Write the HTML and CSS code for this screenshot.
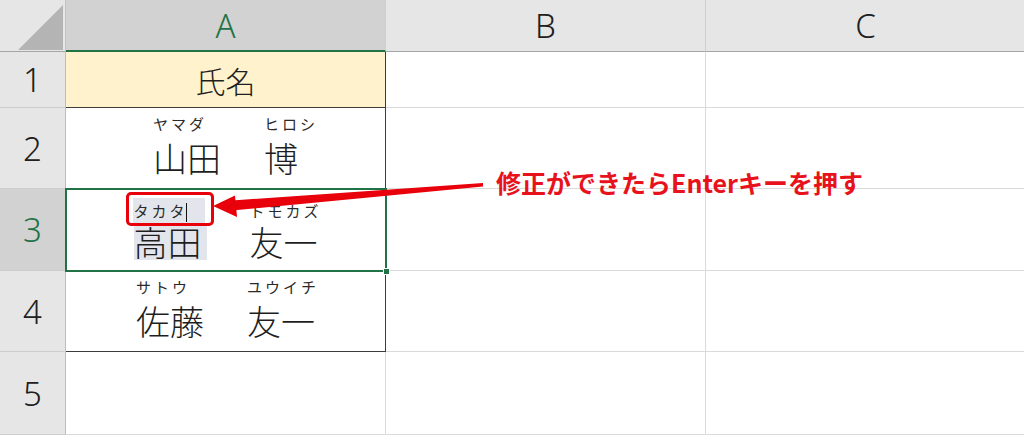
FILE: index.html
```html
<!DOCTYPE html>
<html lang="ja">
<head>
<meta charset="utf-8">
<title>Sheet</title>
<link rel="stylesheet" href="styles.css">
</head>
<body>
<div class="sheet">
  <div class="corner">
    <svg class="corner-tri" width="66" height="52" viewBox="0 0 66 52"><polygon points="18,50 63,50 63,5" fill="#b4b4b4"/></svg>
  </div>
  <div class="colhead sel">A</div>
  <div class="colhead">B</div>
  <div class="colhead">C</div>

  <div class="rowhead">1</div>
  <div class="cell a title">氏名</div>
  <div class="cell"></div>
  <div class="cell"></div>

  <div class="rowhead">2</div>
  <div class="cell a">
    <div class="name">
      <div class="grp"><span class="kana">ヤマダ</span><span class="kanji">山田</span></div>
      <div class="grp"><span class="kana">ヒロシ</span><span class="kanji">博</span></div>
    </div>
  </div>
  <div class="cell"></div>
  <div class="cell"></div>

  <div class="rowhead selrow">3</div>
  <div class="cell a">
    <div class="name editing">
      <div class="grp"><span class="kana hl-kana">タカタ<span class="caret"></span></span><span class="kanji hl-kanji">高田</span></div>
      <div class="grp"><span class="kana">トモカズ</span><span class="kanji">友一</span></div>
    </div>
  </div>
  <div class="cell"></div>
  <div class="cell"></div>

  <div class="rowhead">4</div>
  <div class="cell a last">
    <div class="name">
      <div class="grp"><span class="kana">サトウ</span><span class="kanji">佐藤</span></div>
      <div class="grp"><span class="kana">ユウイチ</span><span class="kanji">友一</span></div>
    </div>
  </div>
  <div class="cell"></div>
  <div class="cell"></div>

  <div class="rowhead">5</div>
  <div class="cell"></div>
  <div class="cell"></div>
  <div class="cell"></div>
</div>

<div class="selection"><span class="handle"></span></div>
<div class="callout-box"></div>
<svg class="arrow" width="1024" height="435" viewBox="0 0 1024 435">
  <polygon points="483,183 483,186.5 232,210.5 232,200.5" fill="#e8000b"/>
  <polygon points="213,206 235,195.5 237,217" fill="#e8000b"/>
</svg>
<div class="callout">修正ができたらEnterキーを押す</div>
</body>
</html>
```

FILE: styles.css
```css
html, body {
  margin: 0;
  padding: 0;
  overflow: hidden;
  background: #ffffff;
}

body {
  position: relative;
  width: 1024px;
  height: 435px;
  font-family: "Noto Sans CJK JP", "Noto Sans", sans-serif;
  color: #1e1e1e;
}

.sheet {
  display: grid;
  grid-template-columns: 66px 320px 320px 320px;
  grid-template-rows: 52px 56px 81px 82px 81px 83px;
}

.sheet > div {
  box-sizing: border-box;
}

.corner {
  background: #e6e6e6;
  border-right: 1px solid #c4c4c4;
  border-bottom: 1px solid #a6a6a6;
  position: relative;
}

.corner-tri {
  position: absolute;
  left: 0;
  top: 0;
}

.colhead {
  background: #e6e6e6;
  border-right: 1px solid #cfcfcf;
  border-bottom: 1px solid #a6a6a6;
  display: flex;
  align-items: center;
  justify-content: center;
  font-family: "Noto Sans", sans-serif;
  font-weight: 300;
  font-size: 33px;
  color: #202020;
}

.colhead.sel {
  background: #d2d2d2;
  color: #217346;
  border-bottom: 2px solid #217346;
}

.rowhead {
  background: #e6e6e6;
  border-right: 1px solid #bdbdbd;
  border-bottom: 1px solid #cdcdcd;
  display: flex;
  align-items: center;
  justify-content: center;
  font-family: "Noto Sans", sans-serif;
  font-weight: 300;
  font-size: 33px;
  color: #202020;
}

.rowhead:last-of-type {
  align-items: flex-start;
  padding-top: 30px;
}

.rowhead.selrow {
  background: #d2d2d2;
  color: #217346;
}

.cell {
  border-right: 1px solid #dadada;
  border-bottom: 1px solid #dadada;
  background: #ffffff;
}

.cell.a {
  border-right: 1px solid #3c3c3c;
  border-bottom: 1px solid #3c3c3c;
}

.cell.title {
  background: #fff2cc;
  display: flex;
  align-items: center;
  justify-content: center;
  font-size: 30px;
  font-weight: 300;
  color: #1e1e1e;
}

.name {
  display: flex;
  justify-content: center;
  gap: 43px;
  padding-top: 7px;
}

.grp {
  display: flex;
  flex-direction: column;
  align-items: flex-start;
}

.kana {
  font-size: 15px;
  line-height: 18px;
  letter-spacing: 3px;
  color: #2a2a2a;
  height: 18px;
  width: 0;
  margin-bottom: 7px;
  white-space: nowrap;
}

.kanji {
  font-size: 34px;
  line-height: 36px;
  font-weight: 300;
  color: #1e1e1e;
  white-space: nowrap;
}

.name.editing {
  padding-top: 9px;
}

.name.editing .kana {
  height: 25px;
  line-height: 25px;
  margin-bottom: 1px;
}

.hl-kana {
  background: #e2e5eb;
  width: 71px;
  margin-left: -1px;
  padding-left: 1px;
  position: relative;
}

.caret {
  display: inline-block;
  vertical-align: middle;
  margin-left: -2px;
  width: 1px;
  height: 19px;
  background: #111111;
}

.hl-kanji {
  background: #e2e5eb;
  padding-right: 5px;
  line-height: 36px;
}

.selection {
  position: absolute;
  left: 65px;
  top: 188px;
  width: 318px;
  height: 80px;
  border: 2px solid #217346;
}

.handle {
  position: absolute;
  right: -5px;
  bottom: -5px;
  width: 5px;
  height: 5px;
  background: #217346;
  border: 1px solid #ffffff;
}

.callout-box {
  position: absolute;
  left: 126px;
  top: 192px;
  width: 82px;
  height: 28px;
  border: 3px solid #e8000b;
  border-radius: 5px;
}

.arrow {
  position: absolute;
  left: 0;
  top: 0;
  pointer-events: none;
}

.callout {
  position: absolute;
  left: 496px;
  top: 169px;
  font-size: 25px;
  line-height: 27px;
  font-weight: 700;
  color: #e8121c;
  white-space: nowrap;
}
```
